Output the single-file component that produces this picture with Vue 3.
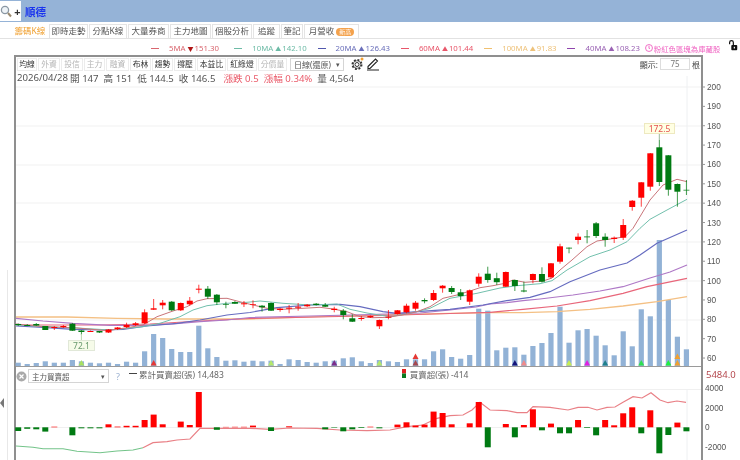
<script setup>
const tabs = [
  { label: '籌碼K線', w: 36 }, { label: '即時走勢', w: 39 }, { label: '分點K線', w: 38 }, { label: '大量券商', w: 41 },
  { label: '主力地圖', w: 41 }, { label: '個股分析', w: 40 }, { label: '追蹤', w: 27 }, { label: '筆記', w: 22 }
]

const legend = [
  { name: '5MA', value: '151.30', color: '#d9666f', text: '#d9666f', down: true },
  { name: '10MA', value: '142.10', color: '#6dbba6', text: '#6dbba6' },
  { name: '20MA', value: '126.43', color: '#5157ad', text: '#6a6fba' },
  { name: '60MA', value: '101.44', color: '#e8566a', text: '#e8566a' },
  { name: '100MA', value: '91.83', color: '#f0c070', text: '#eec27a' },
  { name: '40MA', value: '108.23', color: '#8e44ad', text: '#9a62b4' }
]

const tools = [
  { label: '均線', w: 20 }, { label: '外資', w: 22, off: true }, { label: '投信', w: 22, off: true },
  { label: '主力', w: 21, off: true }, { label: '融資', w: 23, off: true }, { label: '布林', w: 21 },
  { label: '趨勢', w: 21 }, { label: '撐壓', w: 22 }, { label: '本益比', w: 29 },
  { label: '紅綠燈', w: 30 }, { label: '分價量', w: 29, off: true }
]

const barX = (i) => 18.2 + 9.03 * i

// high, body top, body bottom, low (screen y), 1 = red
const candles = [
  [323.5, 324, 325, 326, 0], [324, 325, 326, 326, 0], [323, 324, 325.5, 326, 0], [326, 326, 330, 330, 0],
  [326, 327, 328, 330, 1], [325, 326, 327, 328, 1], [323, 323.7, 330.7, 331, 0], [330, 330.5, 332, 335, 0],
  [330.5, 331, 332, 332, 1], [331, 331, 332.5, 333, 0], [329, 329.5, 332.5, 333, 1], [327, 327.5, 329, 330, 1],
  [322.7, 325, 327, 328, 1], [322, 323.3, 325, 326, 1], [309.3, 312.3, 323.3, 324, 1], [299, 308.3, 309.7, 310, 1],
  [300, 302.7, 305.3, 309.3, 1], [301, 301.7, 310.3, 311, 0], [302.5, 303, 310.3, 311, 1], [297, 300.7, 304.3, 305.7, 1],
  [284.7, 288.7, 289.7, 293.3, 1], [286, 288.7, 296.7, 299, 0], [294, 294.7, 302.3, 305, 0], [301.7, 304.3, 305, 308.3, 0],
  [301, 302, 303.7, 304, 0], [301, 303.3, 304.3, 307, 1], [300.3, 304.3, 305, 308.3, 1], [305, 305.7, 307.3, 311.7, 0],
  [302.5, 303, 310.7, 311, 0], [308, 308.7, 310, 311.7, 1], [305, 307.7, 308.7, 313.3, 1], [303, 306.7, 307.7, 310.7, 1],
  [304, 304.7, 306.3, 307, 1], [303, 303.7, 305, 305.5, 0], [303, 305, 306.7, 307, 0], [306.7, 308.7, 310, 312.3, 1],
  [309, 310.7, 315, 319.3, 0], [314.3, 318.3, 321.7, 322, 0], [316, 318, 319, 320.7, 1], [315.5, 316, 317.3, 318, 1],
  [319.5, 320, 326.3, 329, 1], [310, 316.7, 317.7, 319.3, 1], [310, 310.3, 314, 314.5, 1], [303.7, 305.7, 312.3, 313.3, 1],
  [301, 302.7, 308.7, 310.7, 1], [298.3, 300, 301.3, 303.3, 0], [290, 293, 300, 301, 1], [285, 285.7, 288.3, 292.7, 1],
  [286, 288, 292, 294, 0], [289, 292.3, 296, 300, 0], [289.5, 290.3, 301.7, 305, 1], [273.3, 276.7, 283.7, 286.7, 1],
  [266.7, 273.7, 280, 282.7, 0], [272.7, 278.2, 282.2, 285, 0], [271.5, 272, 286.7, 287, 1], [279.5, 280, 286, 291, 0],
  [281.7, 290.5, 291.5, 292.3, 0], [273.5, 274, 280, 283.3, 1], [267.3, 274, 281.7, 282.5, 0], [263, 263.3, 277.3, 278.3, 1],
  [243.7, 246.3, 261.7, 263.7, 1], [247.5, 247.7, 248.5, 253.3, 0], [233.3, 236.7, 240, 244.3, 1], [230, 236.5, 237.3, 243.3, 0],
  [222, 223.3, 236, 238, 0], [233.3, 236.7, 240, 246.7, 0], [236.5, 237.7, 239, 243, 1], [219, 225, 237.7, 240, 1],
  [200, 200.7, 207, 210.7, 1], [182, 182.3, 197.7, 206.7, 1], [153, 153.3, 186.7, 190.7, 1], [140, 147.3, 182, 186, 0],
  [155, 155.3, 189.7, 195.7, 0], [183.5, 184, 191.7, 206.7, 0], [180, 189.8, 190.5, 195, 0]
]

const volumes = [
  3.3, 2, 3, 4.7, 3.3, 3.3, 6, 4.7, 3.3, 2.7, 3.3, 2, 4.3, 3.3, 14.7, 32, 28, 17, 14, 14, 40.3, 17.7, 9, 5.3, 5.7, 4.3,
  5.3, 4.7, 5.3, 2, 6.7, 6, 4, 3.3, 4.7, 5.3, 7.7, 8.7, 4.7, 3, 6, 4.7, 4, 6.7, 6.7, 6.7, 14.7, 16.7, 9, 7.3, 11, 57.3, 55.3,
  15.7, 18.3, 18.7, 11.3, 20, 23, 33, 59.3, 23.3, 35.7, 37, 30.3, 20.7, 10.7, 34.7, 19.7, 56.7, 49.7, 126, 66, 29.3, 16.7
]

// signed px from the zero line, up is positive
const netBars = [
  -3.7, -1.5, -2, -4.3, 0.6, 0, -8, -1, -1, -1, 3, 0.7, 1.5, 1.5, 7.3, 12.7, 3, 0, 5.7, 2.3, 35.3, 0, -2.5, 0.4, 0.5, 0.5,
  1.7, 0, -3.7, 0, 1, 0, 0, 0, -2, -0.5, -4, -2, -0.7, 0.6, -1, 0, 2.7, 5, 1.7, 2.7, 15.7, 14.3, 3, 0, 4, 25.3, -20,
  0, 3.3, -10, 2.3, 18, -3, 3.7, -6, -6, 7.3, -0.7, -8, 7.3, 2, 14, 20, -6, 17, -26, -7.7, 4.7, -4
]

const marks = [
  { i: 7, c: '#a8e05f' }, { i: 15, c: '#e53935' }, { i: 28, c: '#b5e86a' }, { i: 35, c: '#7b2d8b' }, { i: 40, c: '#b5e86a' },
  { i: 44, c: '#a5484f' }, { i: 44, c: '#e53935', top: true }, { i: 55, c: '#14147a' }, { i: 56, c: '#f08a8a' },
  { i: 61, c: '#c8ee50' }, { i: 63, c: '#e020e0' }, { i: 65, c: '#1f7f8c' }, { i: 69, c: '#30e050' }, { i: 72, c: '#20f040' },
  { i: 73, c: '#f0a030' }, { i: 73, c: '#f0a030', top: true }
]

const ma = [
  { c: '#f4c084', w: 1.3, p: '16,317 67,317 117,318.3 167,319 250,319 317,316.7 383,315 450,313.3 490,312.7 523,312.7 557,311.7 590,309.3 623,306 657,301.7 687,296.7' },
  { c: '#e8667a', w: 1.2, p: '16,325 100,325 150,324 200,321 250,318.5 317,317 383,315.5 450,313.5 490,312.3 523,309.3 557,306 590,300.7 623,293.3 647,286.7 687,278.3' },
  { c: '#ae78c6', w: 1.2, p: '16,318.3 43,321 73,323.3 110,325.3 143,325.3 173,324 200,321.7 227,320 250,317.5 310,316 370,314.5 420,313 450,310 476,307 490,304 507,302.7 523,300.7 540,299 573,295 600,291 623,286.7 650,278 670,272 687,265' },
  { c: '#666cc0', w: 1.2, p: '16,326 43,327.3 73,329.3 100,330 123,329.3 147,326 177,323.3 200,320 227,315 250,312.5 277,307.7 310,305 340,304.3 360,306.7 383,311.7 397,313.3 417,311.7 450,309.3 483,305 506.7,300.7 530,297.3 550,291.7 570,281.7 600,270 627,263 640,255 657,243.3 687,230' },
  { c: '#72c0ad', w: 1, p: '16,325 77,328 110,330 143,326.7 160,323.3 180,316.7 193,310 207,305.7 227,303.3 247,302.3 260,301 283,303.3 310,305 337,304 350,309.3 367,313 390,316.7 410,313.3 430,308.3 450,298.3 477,293.3 500,288 517,285.7 540,283.7 552,280.7 567,270 590,256.7 610,250 627,241.7 640,228.3 650,219.3 667,210 687,199.3' },
  { c: '#c9757a', w: 1, p: '16,324 43,326.7 77,328 107,330.7 127,327.7 143,325 157,316.7 173,311 187,306.7 197,301 207,298.7 227,298.3 237,301 250,304.3 267,308.3 283,309.3 303,308.3 320,307.3 333,309 347,311.7 360,316.7 373,317.7 388,317.3 402,315 417,311.7 430,306.7 443,298.3 457,295 470,291 480,287.7 493,285.7 505,283.3 513,280 525,282.3 543,281 552,278 560,270 572,260 587,246.7 597,241 615,238.3 625,236.7 633,228.3 650,200 663,185 677,179.3 687,181.7' }
]

const cumGreen = '16,446 33,447.3 43,448.7 63,448.7 77,451.3 100,452.7 117,451 133,450 143,447.7'
const cumRed = '143,447.7 153,442.7 167,441.7 177,440 190,439 200,428.3 250,428.3 270,429.3 290,428 317,428.3 340,430 367,430.7 390,430 407,426.7 423,425 437,418.3 450,415.7 463,415 472,410 480,402.3 490,410 507,410.7 517,412.7 527,412.7 533,406.7 550,407.3 568,410 578,407.3 588,407.3 597,410 607,407.3 615,407 623,402.3 633,396.7 642,398 651,392.7 660,400 668,402.7 677,401 686,402.3'

const priceTicks = []
for (let p = 200; p >= 60; p -= 10) priceTicks.push({ p, y: 87 + (200 - p) * 1.936 })
const netTicks = [{ v: 4000, y: 388 }, { v: 2000, y: 408 }, { v: 0, y: 427 }, { v: -2000, y: 447 }]
const gridY = [87, 126, 165, 203, 242, 281, 320]
</script>

<template>
  <div class="page">
    <header class="topbar">
      <div class="search">
        <svg width="12" height="13" viewBox="0 0 12 13">
          <circle cx="5" cy="5" r="3.6" fill="#eef3f7" stroke="#8a97a3" stroke-width="1.3" />
          <path d="M8 8l3 3.5" stroke="#9a8a70" stroke-width="2" />
        </svg>
        <b>+</b>
      </div>
      <span class="stock">順德</span>
    </header>

    <nav class="tabs">
      <span
        v-for="(t, i) in tabs"
        :key="t.label"
        class="tab"
        :class="{ active: i === 0 }"
        :style="{ width: t.w + 'px' }"
      >{{ t.label }}</span>
      <span class="tab revenue">月營收<em>新高</em></span>
    </nav>

    <div class="legend">
      <div v-for="m in legend" :key="m.name" class="ma-item" :style="{ color: m.text }">
        <i class="dash" :style="{ background: m.color }"></i>
        <span>{{ m.name }}</span>
        <span class="arrow" :class="{ down: m.down }">{{ m.down ? '▼' : '▲' }}</span>
        <span>{{ m.value }}</span>
      </div>
      <div class="note">
        <svg width="8" height="8" viewBox="0 0 9 9">
          <circle cx="4.5" cy="4.5" r="3.9" fill="none" stroke="#ef5fc0" />
          <path d="M4.5 2v3h1" fill="none" stroke="#ef5fc0" />
        </svg>
        粉紅色區塊為庫藏股
      </div>
      <svg class="lock" width="10" height="11" viewBox="0 0 11 13">
        <path d="M1.5 5V3a2.2 2.2 0 0 1 4.4 0v3" fill="none" stroke="#111" stroke-width="1.4" />
        <rect x="3.5" y="6" width="7" height="6" rx="1" fill="#111" />
        <rect x="6.4" y="8" width="1.4" height="2" fill="#fff" />
      </svg>
    </div>

    <section class="frame">
      <div class="toolbar">
        <span
          v-for="b in tools"
          :key="b.label"
          class="tool"
          :class="{ off: b.off }"
          :style="{ width: b.w + 'px' }"
        >{{ b.label }}</span>
        <div class="pick period">日線(還原)<i>▾</i></div>
        <svg class="gear" width="14" height="14" viewBox="0 0 14 14">
          <circle cx="7" cy="7.5" r="2" fill="none" stroke="#333" />
          <circle cx="7" cy="7.5" r="4.6" fill="none" stroke="#333" stroke-width="1.8" stroke-dasharray="1.9 1.7" />
          <circle cx="7" cy="7.5" r="3.8" fill="none" stroke="#333" stroke-width=".7" />
          <circle cx="12" cy="2" r="1.5" fill="#f5a030" />
        </svg>
        <svg width="14" height="14" viewBox="0 0 14 14">
          <path d="M2 9.5L9.5 2l2 2L4 11.5H2zM1 13h12" fill="none" stroke="#222" stroke-width="1.1" />
        </svg>
        <div class="show">
          <span>顯示:</span>
          <span class="count">75</span>
          <span>根</span>
        </div>
      </div>

      <div class="quote">
        <span class="date">2026/04/28</span><span>開 147</span><span>高 151</span><span>低 144.5</span><span>收 146.5</span>
        <span class="red first">漲跌 0.5</span><span class="red">漲幅 0.34%</span><span>量 4,564</span>
      </div>

      <svg class="price" width="685" height="282" viewBox="16 84 685 282">
        <line v-for="y in gridY" :key="y" x1="16" x2="701" :y1="y" :y2="y" stroke="#f1f1f1" />
        <line x1="687" x2="687" y1="76" y2="366" stroke="#eef0f2" />

        <rect
          v-for="(v, i) in volumes"
          :key="'v' + i"
          :x="barX(i) - 2.6"
          :y="366 - v"
          width="5.2"
          :height="v"
          fill="#92b2d6"
        />
        <polygon
          v-for="(m, k) in marks"
          :key="'m' + k"
          :points="`${barX(m.i) - 3},${m.top ? 359 : 365.5} ${barX(m.i)},${m.top ? 353.5 : 360} ${barX(m.i) + 3},${m.top ? 359 : 365.5}`"
          :fill="m.c"
        />

        <polyline v-for="l in ma" :key="l.c" :points="l.p" fill="none" :stroke="l.c" :stroke-width="l.w" />

        <g v-for="(c, i) in candles" :key="'c' + i" :fill="c[4] ? '#ff0000' : '#007a12'">
          <rect :x="barX(i) - 0.5" :y="c[0]" width="1" :height="c[3] - c[0]" opacity=".75" />
          <rect :x="barX(i) - 3" :y="c[1]" width="6" :height="c[2] - c[1]" />
        </g>

        <line x1="659.3" x2="659.3" y1="134" y2="140" stroke="#9ab89a" />
        <rect x="644.5" y="123.5" width="30" height="10" fill="#ffffe3" stroke="#eee9c0" />
        <text x="659.5" y="131.5" class="tip-high" text-anchor="middle">172.5</text>
        <line x1="81.4" x2="81.4" y1="334" y2="340" stroke="#b8d8b0" />
        <rect x="68.5" y="340.5" width="26" height="10" fill="#f6fbe9" stroke="#e1e8d8" />
        <text x="81.5" y="348.5" class="tip-low" text-anchor="middle">72.1</text>

        <g v-for="t in priceTicks" :key="t.p">
          <line x1="703" x2="705" :y1="t.y" :y2="t.y" stroke="#999" />
          <text x="707" :y="t.y + 3" class="tick">{{ t.p }}</text>
        </g>
      </svg>

      <div class="sub-head">
        <svg width="11" height="11" viewBox="0 0 11 11">
          <circle cx="5.5" cy="5.5" r="5" fill="#a9a9a9" />
          <path d="M3.5 3.5l4 4m0-4l-4 4" stroke="#fff" stroke-width="1.2" />
        </svg>
        <div class="pick indicator">主力買賣超<i>▾</i></div>
        <span class="help">?</span>
        <span class="series"><i class="dash dark"></i>累計買賣超(張) 14,483</span>
        <span class="series net">
          <svg width="4" height="9" viewBox="0 0 4 9">
            <rect width="4" height="4.5" fill="#e02020" />
            <rect y="4.5" width="4" height="4.5" fill="#0a7a20" />
          </svg>
          買賣超(張) -414
        </span>
        <span class="latest">5484.0</span>
      </div>

      <svg class="net-chart" width="685" height="71" viewBox="16 389 685 71">
        <line x1="16" x2="701" y1="389.5" y2="389.5" stroke="#f0f0f0" />
        <line x1="687" x2="687" y1="389" y2="460" stroke="#eef0f2" />
        <line x1="16" x2="687" y1="427.5" y2="427.5" stroke="#f0f0f0" />
        <polyline :points="cumGreen" fill="none" stroke="#74c48a" stroke-width="1.1" />
        <polyline :points="cumRed" fill="none" stroke="#e98086" stroke-width="1.2" />
        <template v-for="(n, i) in netBars" :key="'n' + i">
          <rect
            v-if="n"
            :x="barX(i) - 3"
            :y="n > 0 ? 427.3 - n : 427.3"
            width="6"
            :height="Math.abs(n)"
            :fill="n > 0 ? '#ff0000' : '#007a12'"
          />
        </template>
        <g v-for="t in netTicks" :key="t.v">
          <text x="705" :y="t.y + 3" class="tick">{{ t.v }}</text>
        </g>
      </svg>
    </section>

    <div class="side-rule"></div>
    <div class="collapse"></div>
  </div>
</template>

<style scoped>
.page {
  position: relative;
  width: 740px;
  height: 460px;
  overflow: hidden;
  background: #fff;
  color: #444;
  font-family: "Noto Sans", "Noto Sans CJK TC", sans-serif;
  font-size: 11px;
  filter: blur(0.3px);
}
.topbar {
  display: flex;
  align-items: center;
  height: 22px;
  background: #95b3d7;
}
.search {
  display: flex;
  align-items: center;
  justify-content: center;
  gap: 2px;
  width: 21px;
  height: 20px;
  background: #fff;
  font-size: 11px;
  color: #333;
}
.stock {
  margin-left: 4px;
  color: #1a34ee;
  font-size: 10.5px;
  font-weight: 700;
}
.tabs {
  display: flex;
  align-items: stretch;
  height: 14px;
  margin-top: 2px;
  padding-left: 12px;
  border-bottom: 1px solid #e2e2e2;
}
.tab {
  display: flex;
  align-items: center;
  justify-content: center;
  box-sizing: border-box;
  margin-right: 1px;
  border: 1px solid #e4e4e4;
  border-bottom: 0;
  color: #555;
  font-size: 8.5px;
  line-height: 1;
  white-space: nowrap;
}
.tab.active {
  border: 0;
  color: #f0a030;
}
.revenue {
  width: 55px;
  gap: 2px;
}
.revenue em {
  padding: 1px 3px;
  border-radius: 6px;
  background: #f4a24c;
  color: #fff;
  font-size: 6px;
  font-style: normal;
}
.legend {
  display: flex;
  align-items: center;
  box-sizing: border-box;
  height: 16px;
  padding: 2px 0 0 151px;
  font-size: 7.8px;
}
.ma-item {
  display: flex;
  align-items: center;
  width: 83.3px;
  white-space: nowrap;
}
.dash {
  display: inline-block;
  width: 8px;
  height: 1px;
  margin-right: 10px;
}
.dash.dark {
  background: #444;
  margin-right: 2px;
}
.arrow {
  margin: 0 1px 0 2px;
  font-size: 6px;
}
.arrow.down {
  color: #b01616;
}
.note {
  display: flex;
  align-items: center;
  gap: 1px;
  margin-left: -6px;
  width: 83px;
  color: #ef5fc0;
  font-size: 7.4px;
  white-space: nowrap;
}
.lock {
  margin-top: -5px;
}
.frame {
  width: 689px;
  margin-left: 14px;
  box-sizing: border-box;
  border: solid #8f8f8f;
  border-width: 2px 2px 0;
}
.toolbar {
  display: flex;
  align-items: center;
  height: 14px;
  padding-left: 1px;
  gap: 1px;
}
.tool {
  border: 1px solid #ececec;
  box-sizing: border-box;
  height: 13px;
  line-height: 11px;
  text-align: center;
  font-size: 7.8px;
  color: #333;
  white-space: nowrap;
}
.tool.off {
  color: #b5b5b5;
}
.pick {
  display: flex;
  align-items: center;
  justify-content: space-between;
  box-sizing: border-box;
  border: 1px solid #d5d5d5;
  padding: 0 3px;
  color: #555;
  white-space: nowrap;
}
.pick i {
  font-size: 7px;
  font-style: normal;
}
.period {
  width: 54px;
  height: 13px;
  margin: 0 5px 0 2px;
  font-size: 8px;
}
.gear {
  margin-right: 1px;
}
.show {
  display: flex;
  align-items: center;
  margin-left: auto;
  margin-right: 1px;
  gap: 2px;
  font-size: 8px;
  color: #444;
}
.count {
  width: 30px;
  height: 12px;
  line-height: 10px;
  box-sizing: border-box;
  border: 1px solid #ddd;
  text-align: center;
  color: #777;
}
.quote {
  display: flex;
  align-items: center;
  gap: 5px;
  height: 13px;
  padding-left: 1px;
  color: #555;
  font-size: 9.6px;
  white-space: nowrap;
}
.quote .date {
  margin-right: -3px;
}
.quote .first {
  margin-left: 3px;
}
.quote .red {
  color: #ea5b6a;
}
.price,
.net-chart {
  display: block;
  overflow: visible;
}
.tick {
  font-family: "Liberation Sans", sans-serif;
  font-size: 8.3px;
  fill: #555;
}
.tip-high {
  font-size: 8.5px;
  fill: #e6504f;
}
.tip-low {
  font-size: 8.5px;
  fill: #6a9a6e;
}
.sub-head {
  position: relative;
  display: flex;
  align-items: center;
  height: 23px;
  border-top: 1px solid #9a9a9a;
  box-sizing: border-box;
  padding: 0 0 4px 0;
  color: #666;
}
.indicator {
  width: 81px;
  height: 14px;
  margin-left: 1px;
  font-size: 7.5px;
}
.help {
  margin-left: 7px;
  color: #9ab0d0;
  font-size: 9px;
}
.series {
  display: flex;
  align-items: center;
  margin: 0 0 5px 9px;
  font-size: 8.5px;
  white-space: nowrap;
}
.series.net {
  gap: 4px;
  margin-left: 178px;
}
.latest {
  position: absolute;
  left: 690px;
  top: 2px;
  color: #b5484e;
  font-size: 9.5px;
  line-height: 12px;
}
.side-rule {
  position: absolute;
  left: 7px;
  top: 270px;
  bottom: 0;
  width: 1px;
  background: #e8e8e8;
}
.collapse {
  position: absolute;
  left: 0;
  top: 398px;
  border: solid transparent;
  border-width: 5px 4px 5px 0;
  border-right-color: #777;
}
</style>

<style>
html, body {
  margin: 0;
  overflow: hidden;
}
</style>
